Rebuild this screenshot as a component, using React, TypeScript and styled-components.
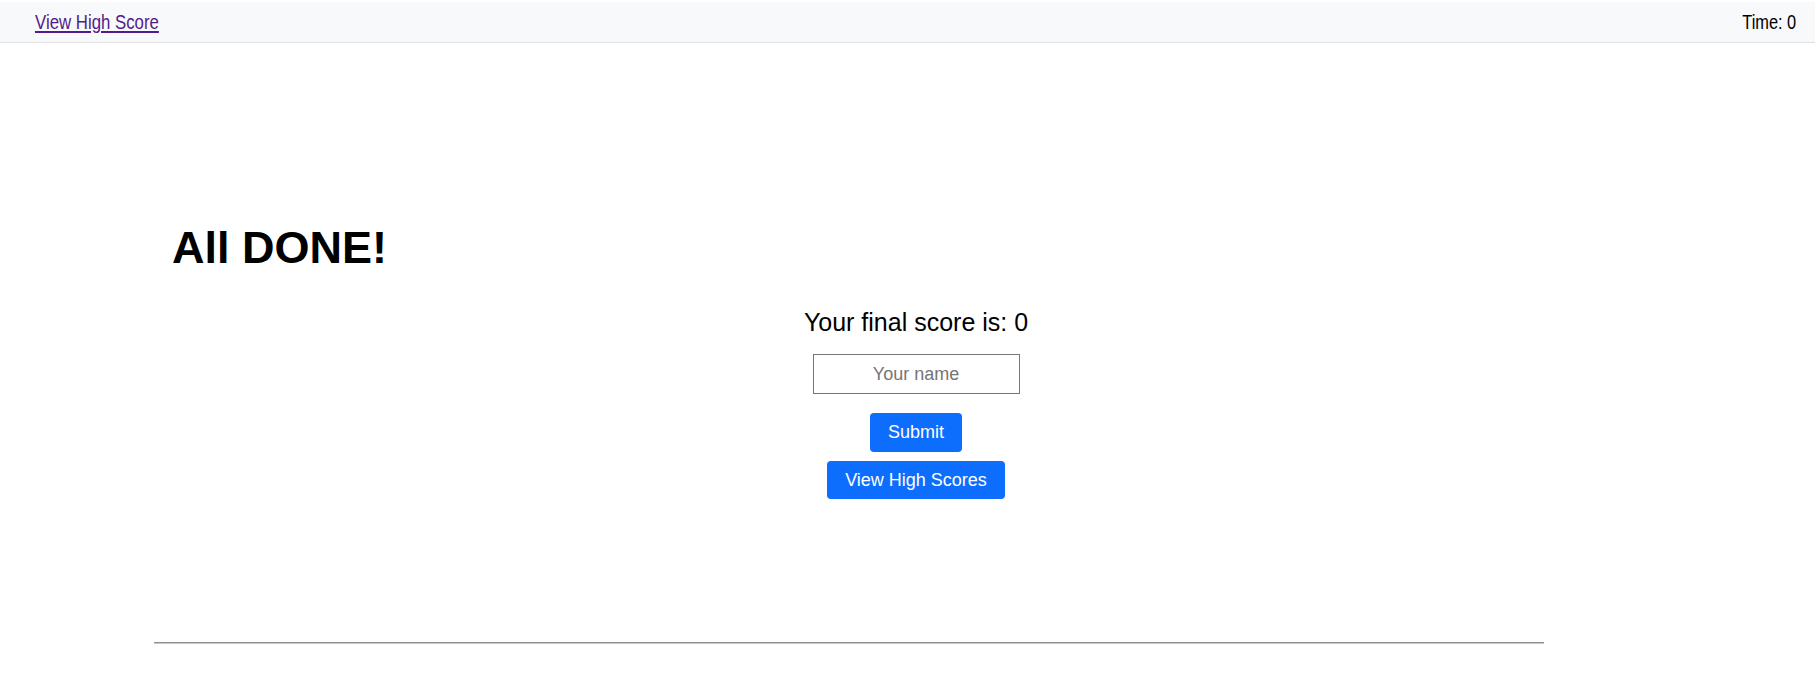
import styled, { createGlobalStyle } from "styled-components";

const GlobalStyle = createGlobalStyle`
  html, body {
    margin: 0;
    padding: 0;
    background: #ffffff;
    font-family: "Liberation Sans", Arial, sans-serif;
    color: #000000;
  }
`;

export default function App(): JSX.Element {
  return (
    <>
      <GlobalStyle />
      <NavBar>
        <NavLink href="#">View High Score</NavLink>
        <Timer>Time: 0</Timer>
      </NavBar>
      <Main>
        <Title>All DONE!</Title>
        <ResultColumn>
          <FinalScore>Your final score is: 0</FinalScore>
          <NameInput type="text" placeholder="Your name" />
          <SubmitButton>Submit</SubmitButton>
          <ScoresButton>View High Scores</ScoresButton>
        </ResultColumn>
        <Divider />
      </Main>
    </>
  );
}

const NavBar = styled.nav`
  display: flex;
  align-items: center;
  justify-content: space-between;
  box-sizing: border-box;
  height: 41px;
  margin-top: 2px;
  padding: 0 19px 0 35px;
  background: #f8f9fa;
  border-bottom: 1px solid #dee2e6;
  font-family: "Liberation Sans Narrow", "Liberation Sans", Arial, sans-serif;
  font-size: 21px;
`;

/* the original uses a condensed face; squeeze the regular one to match */
const NavLink = styled.a`
  display: inline-block;
  color: #551a8b;
  text-decoration: underline;
  transform: scaleX(0.8);
  transform-origin: left center;
`;

const Timer = styled.span`
  display: inline-block;
  color: #000000;
  transform: scaleX(0.78);
  transform-origin: right center;
`;

const Main = styled.main`
  margin: 0 137px 0 154px;
  padding-top: 178px;
`;

const Title = styled.h1`
  margin: 0;
  padding-left: 18px;
  font-size: 45px;
  line-height: 53px;
  font-weight: 700;
`;

const ResultColumn = styled.section`
  display: flex;
  flex-direction: column;
  align-items: center;
`;

const FinalScore = styled.p`
  margin: 34px 0 0;
  font-size: 25px;
  line-height: 29px;
`;

const NameInput = styled.input`
  box-sizing: border-box;
  width: 207px;
  height: 40px;
  margin-top: 17px;
  border: 1px solid #767676;
  border-radius: 0;
  outline: none;
  text-align: center;
  font-family: "Liberation Sans", Arial, sans-serif;
  font-size: 18px;

  &::placeholder {
    color: #757575;
  }
`;

const Button = styled.button`
  box-sizing: border-box;
  padding: 0 18px;
  border: none;
  border-radius: 4px;
  background: #0d6efd;
  color: #ffffff;
  font-family: "Liberation Sans", Arial, sans-serif;
  font-size: 18px;
  cursor: pointer;
`;

const SubmitButton = styled(Button)`
  height: 39px;
  margin-top: 19px;
`;

const ScoresButton = styled(Button)`
  height: 38px;
  margin-top: 9px;
`;

const Divider = styled.hr`
  width: 1390px;
  height: 0;
  margin: 143px 0 0;
  border: none;
  border-top: 1px solid #8f8f8f;
  border-bottom: 1px solid #c8c8c8;
`;
